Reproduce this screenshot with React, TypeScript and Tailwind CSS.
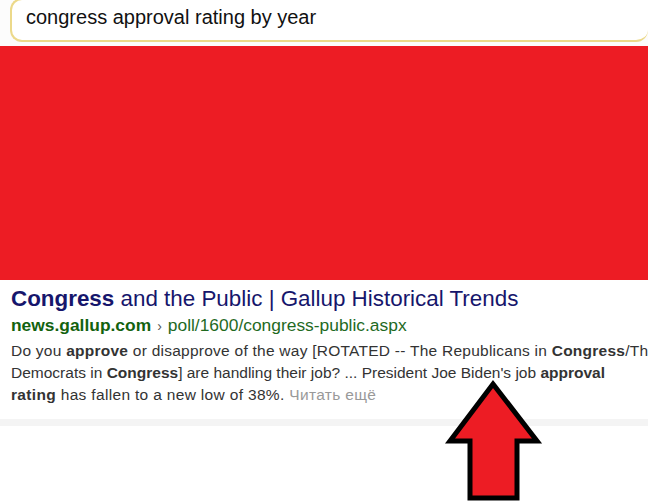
export default function App() {
  return (
    <div
      className="relative w-[648px] h-[504px] overflow-hidden bg-white"
      style={{ fontFamily: '"Liberation Sans", Arial, sans-serif' }}
    >
      {/* search field */}
      <div className="h-[48px] bg-[#fcfcfc] pl-[10px]">
        <div className="h-[44px] -mt-[2px] rounded-b-[12px] rounded-tl-[12px] border-2 border-[#ecd98a] border-r-0 bg-white pl-[14px] pt-[5px] text-[20px] leading-[24px] text-[#111] whitespace-nowrap">
          congress approval rating by year
        </div>
      </div>

      {/* banner */}
      <div className="h-[234px] bg-[#ed1c24]" />

      {/* result */}
      <div className="pl-[11px] pt-[6px] h-[139px]">
        <div className="text-[22.4px] leading-[26px] text-[#16166c] whitespace-nowrap">
          <span className="font-bold">Congress</span> and the Public | Gallup Historical Trends
        </div>
        <div className="mt-[2px] text-[17.4px] leading-[22px] text-[#1f6a1f] whitespace-nowrap">
          <span className="font-bold text-[#13620f]">news.gallup.com</span>
          <span className="text-[#555] text-[14px] mx-[6px]">›</span>
          poll/1600/congress-public.aspx
        </div>
        <div className="mt-[3px] text-[15.5px] leading-[22px] text-[#333] whitespace-nowrap">
          <div className="tracking-[0.25px]">
            Do you <b>approve</b> or disapprove of the way [ROTATED -- The Republicans in <b>Congress</b>/The
          </div>
          <div>
            Democrats in <b>Congress</b>] are handling their job? ... President Joe Biden's job <b>approval</b>
          </div>
          <div className="tracking-[0.33px]">
            <b>rating</b> has fallen to a new low of 38%. <span className="text-[#999]">Читать ещё</span>
          </div>
        </div>
      </div>
      <div className="h-[7px] bg-[#f4f4f4]" />

      {/* pointer arrow */}
      <svg className="absolute left-0 top-0" width="648" height="504" viewBox="0 0 648 504">
        <polygon
          points="493,384 537,441 517,441 517,498 470,498 470,441 450,441"
          fill="#ed1c24"
          stroke="#000"
          strokeWidth="5"
          strokeLinejoin="miter"
        />
      </svg>
    </div>
  );
}
